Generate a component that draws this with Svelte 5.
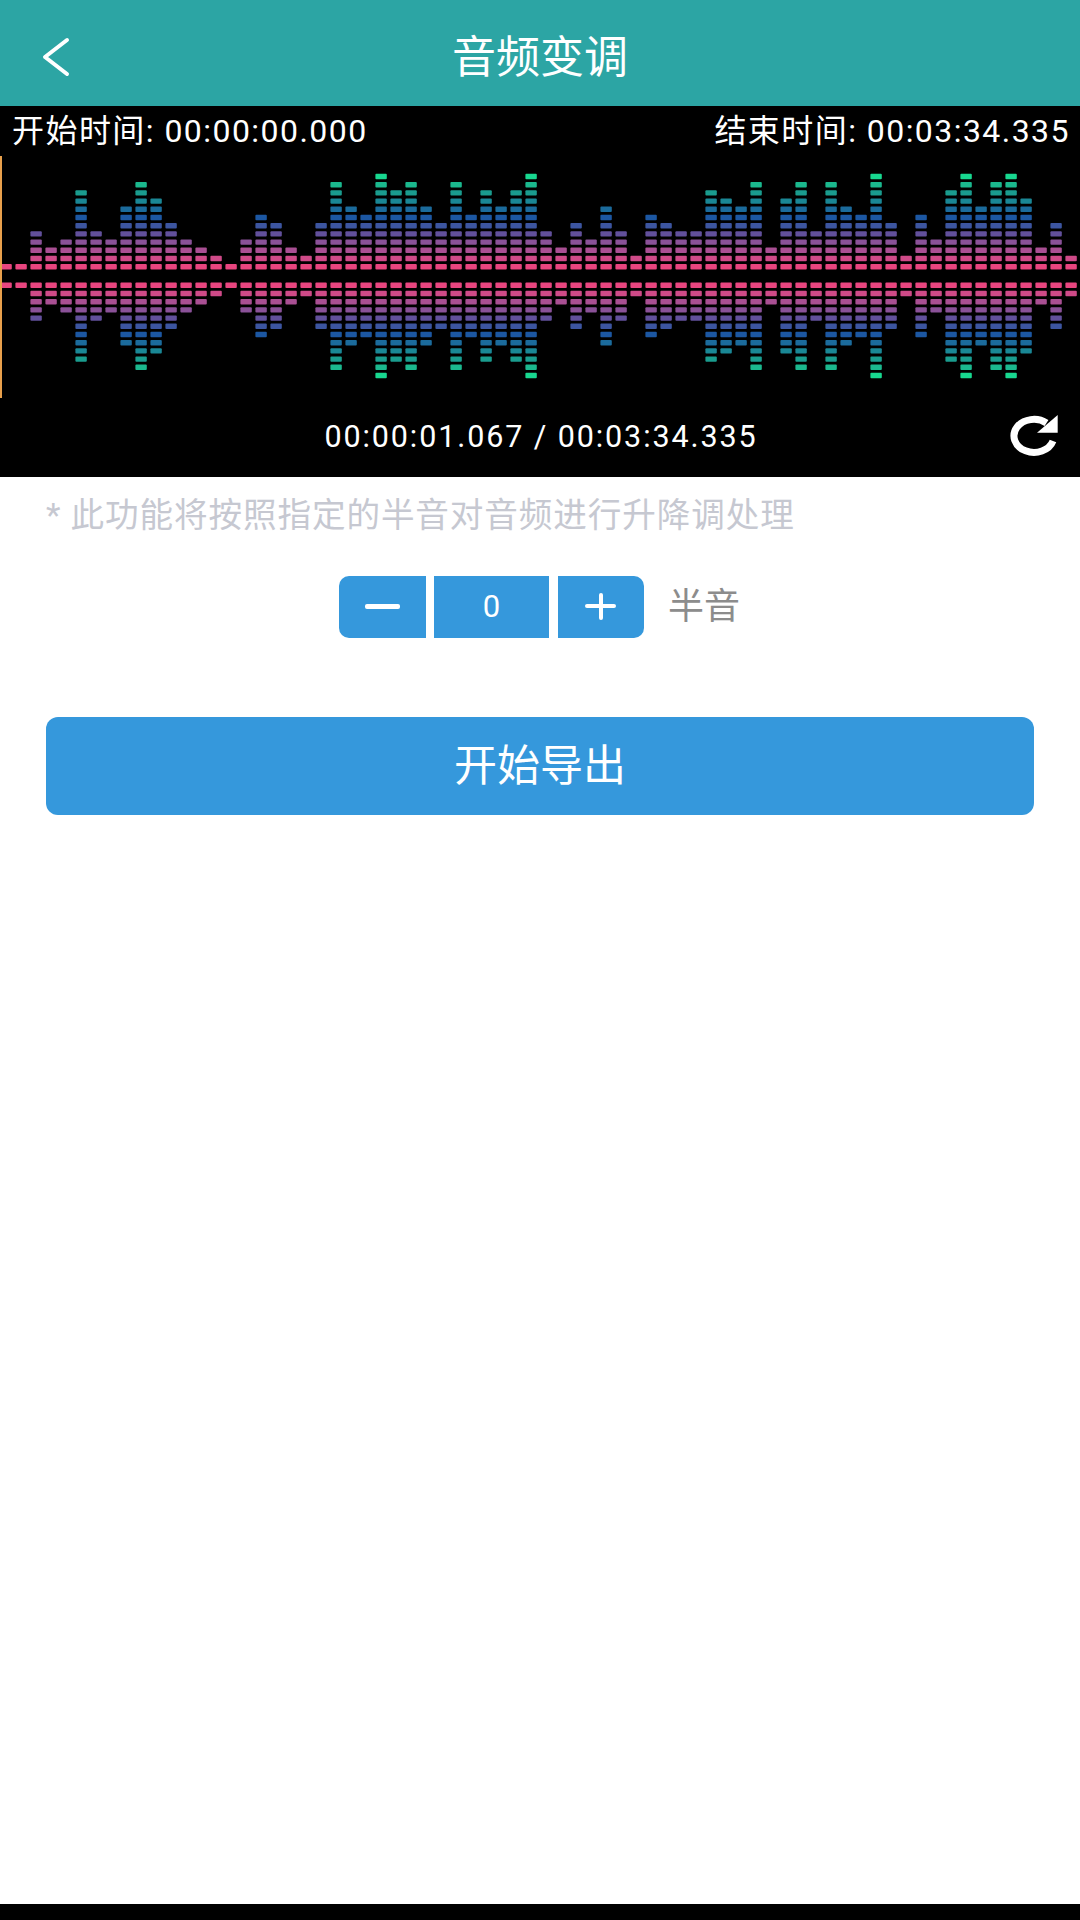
<script>
	// cells lit per column, the lower half mirrors the upper one
	const levels = [
		1, 1, 5, 3, 4, 10, 5, 4, 8, 11, 9, 6, 4, 3, 2, 1, 4, 7, 6, 3, 2, 6, 11, 8, 7, 12, 10, 11, 8, 6, 11, 7, 10, 8, 10, 12,
		5, 3, 6, 4, 8, 5, 2, 7, 6, 5, 5, 10, 9, 8, 11, 3, 9, 11, 5, 11, 8, 7, 12, 6, 2, 7, 4, 10, 12, 8, 11, 12, 9, 3, 6, 2
	];
	const colors = [
		'#e8457f', '#cf4a88', '#a94f93', '#8a5198', '#62509c', '#3c55a0',
		'#1c57a2', '#1b6b9c', '#1a8795', '#1a9c8e', '#1bb88e', '#18d890'
	];

	const cells = [];
	levels.forEach((level, col) => {
		for (let row = 0; row < level; ++row) {
			const x = 0.4 + col * 15;
			cells.push({ x, y: 108 - row * 8.2, color: colors[row] });
			cells.push({ x, y: 126.6 + row * 8.2, color: colors[row] });
		}
	});
</script>

<div class="page">
	<header class="title-bar">
		<button class="back" aria-label="back">
			<svg width="28" height="40" viewBox="0 0 28 40">
				<polyline points="25,3 3,20 25,37" fill="none" stroke="#fff" stroke-width="4" stroke-linecap="round" stroke-linejoin="round" />
			</svg>
		</button>
		<h1>音频变调</h1>
	</header>

	<section class="player">
		<div class="range">
			<span>开始时间: 00:00:00.000</span>
			<span>结束时间: 00:03:34.335</span>
		</div>
		<div class="wave">
			<svg width="1080" height="242" viewBox="0 0 1080 242">
				{#each cells as c}
					<rect x={c.x} y={c.y} width="11.4" height="5.4" rx="1" fill={c.color} />
				{/each}
			</svg>
			<div class="cursor"></div>
		</div>
		<div class="progress">
			<span class="time">00:00:01.067 / 00:03:34.335</span>
			<svg class="replay" width="52" height="46" viewBox="0 0 52 46">
				<path d="M38.5 10A20 16.5 0 1 0 45 28" fill="none" stroke="#fff" stroke-width="7" />
				<polygon points="49.7,2 49.7,19.7 29,19.7" fill="#fff" />
			</svg>
		</div>
	</section>

	<p class="hint">* 此功能将按照指定的半音对音频进行升降调处理</p>

	<div class="stepper">
		<button class="step minus" aria-label="minus"></button>
		<div class="value">0</div>
		<button class="step plus" aria-label="plus"></button>
		<span class="unit">半音</span>
	</div>

	<button class="export">开始导出</button>

	<div class="nav-bar"></div>
</div>

<style>
	:global(body) {
		margin: 0;
		background: #fff;
	}

	.page {
		width: 1080px;
		height: 1920px;
		display: flex;
		flex-direction: column;
		font-family: Roboto, "Noto Sans CJK SC", sans-serif;
	}

	.title-bar {
		height: 106px;
		flex: none;
		background: #2ca5a4;
		display: flex;
		align-items: center;
		justify-content: center;
		position: relative;
	}

	.title-bar h1 {
		margin: 0;
		padding-top: 2px;
		font-size: 44px;
		font-weight: 400;
		color: #fff;
	}

	.back {
		position: absolute;
		left: 42px;
		top: 37px;
		padding: 0;
		border: 0;
		background: none;
		line-height: 0;
	}

	.player {
		height: 371px;
		flex: none;
		background: #000;
		color: #fff;
		display: flex;
		flex-direction: column;
	}

	.range {
		height: 50px;
		box-sizing: border-box;
		padding: 0 10px 6px 12px;
		display: flex;
		align-items: center;
		justify-content: space-between;
		font-size: 32px;
		letter-spacing: 1.45px;
	}

	.wave {
		height: 242px;
		position: relative;
	}

	.wave svg {
		display: block;
		filter: blur(0.7px);
	}

	.cursor {
		position: absolute;
		left: 0;
		top: 0;
		bottom: 0;
		width: 2px;
		background: #e8a04c;
	}

	.progress {
		flex: 1;
		display: grid;
		grid-template-columns: 1fr auto 1fr;
		align-items: center;
		padding-right: 20px;
	}

	.time {
		grid-column: 2;
		font-size: 30.5px;
		letter-spacing: 1.9px;
		margin-left: 22px;
		padding-bottom: 2px;
	}

	.replay {
		justify-self: end;
		margin-bottom: 4px;
	}

	.hint {
		margin: 0;
		padding: 16px 0 0 46px;
		font-size: 33.6px;
		line-height: 46px;
		color: #c6c8d1;
		letter-spacing: 0.9px;
		box-sizing: border-box;
		height: 99px;
		flex: none;
	}

	.stepper {
		height: 62px;
		flex: none;
		display: flex;
		padding-left: 339px;
	}

	.step,
	.value {
		background: #3598dc;
		border: 0;
		padding: 0;
		position: relative;
	}

	.minus {
		width: 87px;
		border-radius: 10px 0 0 10px;
	}

	.plus {
		width: 86px;
		margin-left: 9px;
		border-radius: 0 10px 10px 0;
	}

	.minus::before,
	.plus::before,
	.plus::after {
		content: "";
		position: absolute;
		background: #fff;
		border-radius: 2px;
	}

	.minus::before {
		left: 26px;
		top: 28px;
		width: 35px;
		height: 5px;
	}

	.plus::before {
		left: 27px;
		top: 28px;
		width: 31px;
		height: 4px;
	}

	.plus::after {
		left: 41px;
		top: 17px;
		width: 4px;
		height: 27px;
	}

	.value {
		width: 115px;
		margin-left: 8px;
		color: #fff;
		font-size: 31px;
		line-height: 62px;
		text-align: center;
	}

	.unit {
		margin-left: 24px;
		font-size: 36px;
		line-height: 62px;
		color: #8c8c8c;
	}

	.export {
		flex: none;
		margin: 79px 46px 0;
		height: 98px;
		padding: 0 0 8px;
		border: 0;
		border-radius: 12px;
		background: #3598dc;
		color: #fff;
		font-family: inherit;
		font-size: 43px;
	}

	.nav-bar {
		margin-top: auto;
		height: 16px;
		flex: none;
		background: #000;
	}
</style>
